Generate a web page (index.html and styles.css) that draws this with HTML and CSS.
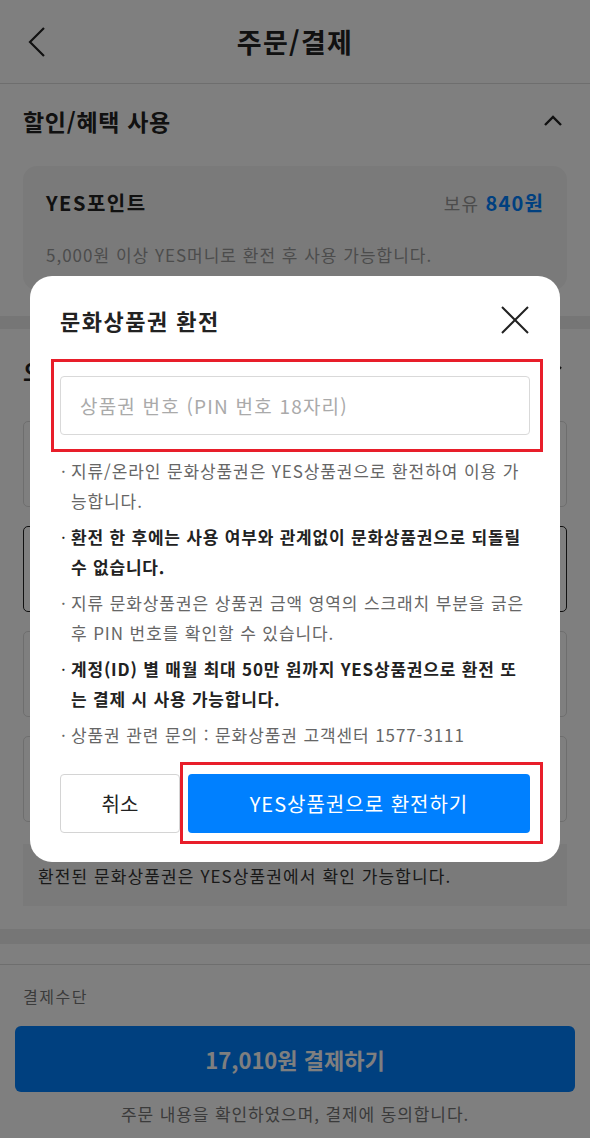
FILE: index.html
```html
<!DOCTYPE html>
<html lang="ko">
<head>
<meta charset="UTF-8" />
<meta name="viewport" content="width=device-width, initial-scale=1" />
<title>주문/결제</title>
<link rel="stylesheet" href="styles.css">
</head>
<body>

<header class="top-bar">
    <a class="back-btn" href="#">
        <svg width="18" height="32" viewBox="0 0 18 32"><path d="M16 2 L2 16 L16 30" fill="none" stroke="#222" stroke-width="2.2"/></svg>
    </a>
    <h1>주문/결제</h1>
    <span></span>
</header>

<section class="sec sec-benefit">
    <div class="sec-head">
        <h2>할인/혜택 사용</h2>
        <svg width="20" height="12" viewBox="0 0 20 12"><path d="M2 10 L10 2 L18 10" fill="none" stroke="#222" stroke-width="2.4"/></svg>
    </div>
    <div class="point-card">
        <div class="point-row">
            <strong>YES포인트</strong>
            <span class="own">보유 <b>840원</b></span>
        </div>
        <p class="point-desc">5,000원 이상 YES머니로 환전 후 사용 가능합니다.</p>
    </div>
</section>

<div class="band"></div>

<section class="sec sec-gift">
    <div class="sec-head">
        <h2>오프라인 상품권</h2>
        <svg width="20" height="12" viewBox="0 0 20 12"><path d="M2 2 L10 10 L18 2" fill="none" stroke="#222" stroke-width="2.4"/></svg>
    </div>
    <div class="opt-list">
        <div class="opt"></div>
        <div class="opt selected"></div>
        <div class="opt"></div>
        <div class="opt"></div>
    </div>
    <div class="info-box">환전된 문화상품권은 YES상품권에서 확인 가능합니다.</div>
</section>

<div class="band band-b"></div>

<footer class="pay-bar">
    <p class="pay-label">결제수단</p>
    <button class="pay-btn">17,010원 결제하기</button>
    <p class="pay-note">주문 내용을 확인하였으며, 결제에 동의합니다.</p>
</footer>

<!-- 문화상품권 환전 팝업 -->
<div class="dim">
    <div class="modal">
        <div class="modal-head">
            <h3>문화상품권 환전</h3>
            <svg width="30" height="30" viewBox="0 0 30 30"><path d="M2 2 L28 28 M28 2 L2 28" fill="none" stroke="#222" stroke-width="2"/></svg>
        </div>
        <input class="pin-input" type="text" placeholder="상품권 번호 (PIN 번호 18자리)">
        <ul class="notice">
            <li><span class="dot">·</span><span>지류/온라인 문화상품권은 YES상품권으로 환전하여 이용 가능합니다.</span></li>
            <li class="strong"><span class="dot">·</span><span>환전 한 후에는 사용 여부와 관계없이 문화상품권으로 되돌릴 수 없습니다.</span></li>
            <li><span class="dot">·</span><span>지류 문화상품권은 상품권 금액 영역의 스크래치 부분을 긁은 후 PIN 번호를 확인할 수 있습니다.</span></li>
            <li class="strong"><span class="dot">·</span><span>계정(ID) 별 매월 최대 50만 원까지 YES상품권으로 환전 또는 결제 시 사용 가능합니다.</span></li>
            <li><span class="dot">·</span><span>상품권 관련 문의 : 문화상품권 고객센터 1577-3111</span></li>
        </ul>
        <div class="modal-btns">
            <button class="btn-cancel">취소</button>
            <button class="btn-ok">YES상품권으로 환전하기</button>
        </div>
        <div class="mark mark-input"></div>
        <div class="mark mark-btn"></div>
    </div>
</div>

</body>
</html>
```

FILE: styles.css
```css
* {
    box-sizing: border-box;
}
body {
    margin: 0;
    background: #fff;
    color: #222;
    font-family: "Noto Sans CJK KR", "Noto Sans", sans-serif;
    overflow: hidden;
}
h1, h2, h3, p, ul {
    margin: 0;
    padding: 0;
}

/* 상단 바 */
.top-bar {
    height: 84px;
    border-bottom: 1px solid #dcdcdc;
    display: grid;
    grid-template-columns: 80px 1fr 80px;
    align-items: center;
}
.back-btn {
    padding-left: 28px;
    display: flex;
}
.top-bar h1 {
    text-align: center;
    font-size: 27px;
    font-weight: 700;
    line-height: 34px;
    letter-spacing: 1.3px;
}

/* 섹션 */
.sec {
    padding: 0 23px;
}
.sec-head {
    height: 74px;
    display: flex;
    justify-content: space-between;
    align-items: center;
    padding-right: 4px;
}
.sec-head h2 {
    font-size: 23px;
    font-weight: 700;
    letter-spacing: 0.7px;
}
.sec-benefit {
    padding-bottom: 26px;
}
.point-card {
    margin-top: 8px;
    background: #f5f5f5;
    border-radius: 14px;
    padding: 22px 23px;
}
.point-row {
    display: flex;
    justify-content: space-between;
    align-items: center;
    line-height: 30px;
}
.point-row strong {
    font-size: 20px;
    letter-spacing: 1.5px;
}
.own {
    font-size: 18px;
    color: #999;
    letter-spacing: 1.2px;
}
.own b {
    font-size: 20px;
    color: #0080ff;
}
.point-desc {
    margin-top: 24px;
    font-size: 17px;
    line-height: 26px;
    color: #999;
    letter-spacing: 1px;
}

.band {
    height: 13px;
    background: #ececec;
}
.band-b {
    height: 15px;
    margin-bottom: 20px;
}

.sec-gift {
    padding-top: 5px;
    padding-bottom: 23px;
}
.opt-list {
    margin-top: 13px;
    display: flex;
    flex-direction: column;
    gap: 19px;
}
.opt {
    height: 86px;
    border: 1px solid #ddd;
    border-radius: 5px;
}
.opt.selected {
    border-color: #222;
}
.info-box {
    margin-top: 22px;
    height: 62px;
    background: #f5f5f5;
    padding: 0 15px;
    display: flex;
    align-items: center;
    font-size: 17px;
    color: #333;
    letter-spacing: 1.1px;
}

/* 하단 결제 */
.pay-bar {
    border-top: 1px solid #dcdcdc;
    padding: 19px 15px 0;
}
.pay-label {
    padding-left: 8px;
    font-size: 16px;
    line-height: 24px;
    color: #777;
    letter-spacing: 1.5px;
}
.pay-btn {
    margin-top: 18px;
    width: 100%;
    height: 66px;
    border: 0;
    border-radius: 6px;
    background: #0080ff;
    color: #fff;
    font-family: inherit;
    font-size: 22px;
    font-weight: 700;
}
.pay-note {
    margin-top: 9px;
    text-align: center;
    font-size: 17px;
    line-height: 26px;
    color: #777;
    letter-spacing: 0.9px;
}

/* 팝업 */
.dim {
    position: fixed;
    inset: 0;
    background: rgba(0, 0, 0, 0.5);
    display: flex;
    justify-content: center;
    align-items: center;
}
.modal {
    position: relative;
    width: 530px;
    background: #fff;
    border-radius: 22px;
    padding: 29px 30px 29px;
}
.modal-head {
    display: flex;
    justify-content: space-between;
    align-items: center;
    height: 30px;
}
.modal-head h3 {
    font-size: 22px;
    font-weight: 700;
    letter-spacing: 1.5px;
}
.pin-input {
    display: block;
    margin-top: 41px;
    width: 100%;
    height: 59px;
    border: 1px solid #d9d9d9;
    border-radius: 4px;
    padding: 0 19px;
    font-family: inherit;
    font-size: 19px;
    letter-spacing: 1.2px;
}
.pin-input::placeholder {
    color: #aaa;
}
.notice {
    list-style: none;
    margin-top: 21px;
    display: flex;
    flex-direction: column;
    gap: 7px;
}
.notice li {
    display: flex;
    font-size: 17px;
    line-height: 29.5px;
    color: #666;
    letter-spacing: 0.9px;
}
.notice li.strong {
    color: #222;
    font-weight: 700;
    letter-spacing: 0.8px;
}
.dot {
    flex: none;
    width: 11px;
    padding-left: 1px;
    font-weight: 400;
    letter-spacing: 0;
}
.modal-btns {
    margin-top: 24px;
    display: flex;
    gap: 8px;
}
.modal-btns button {
    height: 59px;
    border-radius: 4px;
    font-family: inherit;
    font-size: 20px;
}
.btn-cancel {
    width: 120px;
    background: #fff;
    border: 1px solid #d4d4d4;
    color: #222;
}
.btn-ok {
    flex: 1;
    border: 0;
    background: #0080ff;
    color: #fff;
    letter-spacing: 1px;
}

/* 빨간 표시 박스 */
.mark {
    position: absolute;
    border: 3px solid #e81e2a;
}
.mark-input {
    left: 21px;
    top: 83px;
    width: 492px;
    height: 93px;
}
.mark-btn {
    left: 150px;
    top: 486px;
    width: 363px;
    height: 82px;
}
```
